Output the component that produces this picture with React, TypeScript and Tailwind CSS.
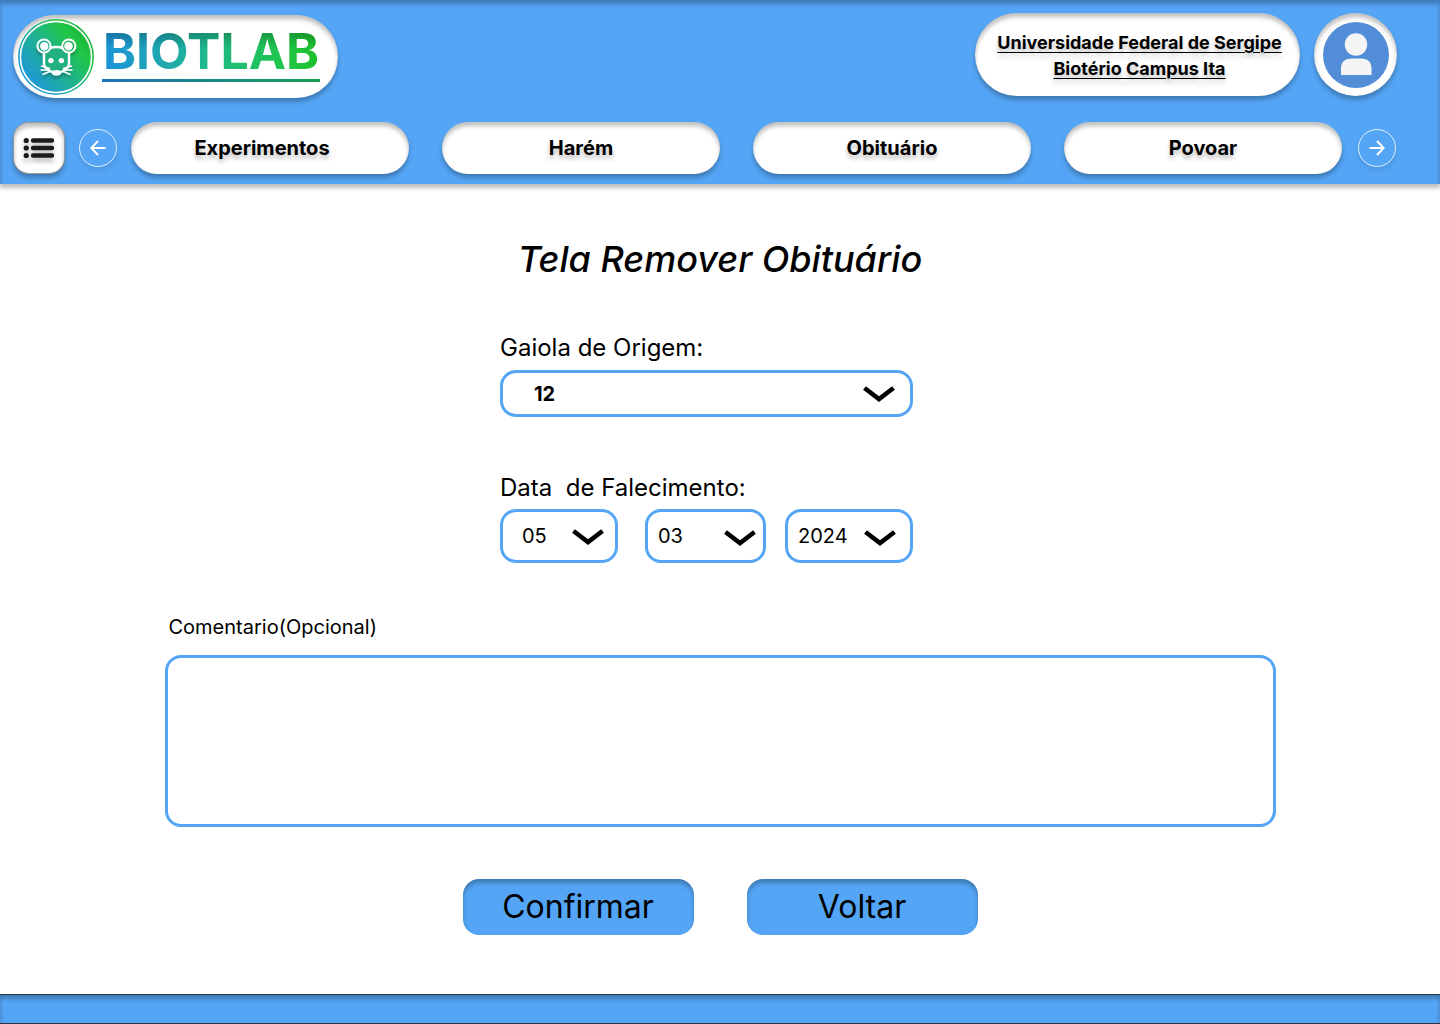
import { useState } from "react";
import type { ReactNode } from "react";

const PILL_SHADOW =
  "bg-white shadow-[0_4px_4px_rgba(0,0,0,0.25),inset_0_4px_4px_rgba(0,0,0,0.25)]";

function MouseBadge() {
  return (
    <svg viewBox="0 0 78 78" className="size-[78px] shrink-0" aria-hidden="true">
      <defs>
        <linearGradient id="badge" x1="0.1" y1="0.8" x2="0.85" y2="0.2">
          <stop offset="0" stopColor="#1c96dd" />
          <stop offset="0.5" stopColor="#1fb48c" />
          <stop offset="0.85" stopColor="#1fc745" />
          <stop offset="1" stopColor="#1bb53c" />
        </linearGradient>
        <filter id="soft" x="-20%" y="-20%" width="140%" height="150%">
          <feDropShadow dx="0" dy="3" stdDeviation="1.5" floodOpacity="0.25" />
        </filter>
      </defs>
      <circle cx="39" cy="39" r="38" fill="url(#badge)" />
      <circle cx="39" cy="39" r="35.6" fill="none" stroke="white" strokeWidth="1.6" />
      <g filter="url(#soft)">
        <path
          d="M27 34V46C27 49 30 51.500 33 53L39.400 56L46 53C49 51.500 52 49 52 46V34C49 31 45 29 39.500 29S30 31 27 34Z"
          fill="#20b07e"
          stroke="white"
          strokeWidth="2.4"
        />
        <circle cx="27" cy="28" r="6.600" fill="#20a98c" stroke="white" strokeWidth="2" />
        <circle cx="51.8" cy="28" r="6.600" fill="#20b860" stroke="white" strokeWidth="2" />
        <circle cx="27.300" cy="28.3" r="4.200" fill="white" />
        <circle cx="51.500" cy="28.3" r="4.200" fill="white" />
        <circle cx="33.9" cy="42.6" r="2.7" fill="white" />
        <circle cx="44.4" cy="42.6" r="2.7" fill="white" />
        <ellipse cx="39.4" cy="54.800" rx="4.600" ry="2.800" fill="white" />
        <path d="M33 50.500L24 48M33 52L23.500 52M34 53L25.500 56.500M46 50.500L55 48M46 52L55.500 52M45 53L53.500 56.500" stroke="white" strokeWidth="1.5" />
      </g>
    </svg>
  );
}

function Chevron() {
  return (
    <svg viewBox="0 0 32 18" className="pointer-events-none h-[18px] w-8" fill="none" stroke="black" strokeWidth="4.6" aria-hidden="true">
      <path d="M1.500 3L16 14L30.500 3" />
    </svg>
  );
}

function Picker({ id, label, options, box, field, icon }: {
  id: string; label?: string; options: string[]; box: string; field: string; icon: string;
}) {
  const [value, setValue] = useState(options[0]);
  return (
    <div className={`relative ${box}`}>
      <select
        id={id}
        aria-label={label}
        value={value}
        onChange={(e) => setValue(e.target.value)}
        className={`size-full appearance-none rounded-2xl border-3 border-[#54a5f5] bg-white text-xl text-black ${field}`}
      >
        {options.map((o) => (
          <option key={o}>{o}</option>
        ))}
      </select>
      <span className={`pointer-events-none absolute inset-y-0 flex items-center ${icon}`}>
        <Chevron />
      </span>
    </div>
  );
}

function ArrowButton({ label, path }: { label: string; path: string }) {
  return (
    <button aria-label={label} className="flex size-[38px] shrink-0 items-center justify-center rounded-full border border-white/80 shadow-[0_4px_4px_rgba(0,0,0,0.08)]">
      <svg viewBox="0 0 16 16" className="size-4" fill="none" stroke="white" strokeWidth="2" aria-hidden="true">
        <path d={path} />
      </svg>
    </button>
  );
}

function ActionButton({ children }: { children: ReactNode }) {
  return (
    <button className="h-14 w-[231px] rounded-2xl bg-[#54a5f5] text-[32px] leading-none shadow-[inset_0_4px_4px_rgba(0,0,0,0.25)]">
      {children}
    </button>
  );
}

const NAV_ITEMS = [
  { name: "Experimentos", align: "pr-4" },
  { name: "Harém", align: "" },
  { name: "Obituário", align: "" },
  { name: "Povoar", align: "" },
];

export default function App() {
  return (
    <div className="flex min-h-screen flex-col bg-white font-['Inter',sans-serif] text-black">
      <header className="flex flex-col gap-6 bg-[#54a5f5] px-[13px] pt-[13px] pb-[10px] shadow-[0_4px_4px_rgba(0,0,0,0.25),inset_0_4px_4px_rgba(0,0,0,0.25)]">
        <div className="flex items-start justify-between pr-[30px]">
          <a href="#" className={`mt-[2px] flex h-[83px] w-[325px] items-center rounded-full pl-1 ${PILL_SHADOW}`}>
            <MouseBadge />
            <span className="mb-[9px] ml-[7px] flex flex-col border-b-3 [border-image:linear-gradient(to_right,#1b75bc,#1b9a50)_1]">
              <span className="bg-[linear-gradient(to_bottom,rgba(0,0,0,0.2)_20%,transparent_45%),linear-gradient(to_right,#1c92dc,#20b88a_50%,#1fc745_85%,#1bbf2a)] bg-clip-text px-px text-[50px] leading-[56px] font-bold text-transparent">
                BIOTLAB
              </span>
            </span>
          </a>
          <div className="flex items-center gap-[14px]">
            <p className={`flex h-[83px] w-[325px] flex-col items-center justify-center rounded-full pt-[2px] pl-1 text-center text-lg leading-[26px] font-bold underline decoration-1 underline-offset-[3px] [text-shadow:0_4px_4px_rgba(0,0,0,0.25)] ${PILL_SHADOW}`}>
              <span>Universidade Federal de Sergipe</span>
              <span>Biotério Campus Ita</span>
            </p>
            <button aria-label="Perfil" className={`flex size-[83px] items-center justify-center rounded-full ${PILL_SHADOW}`}>
              <svg viewBox="0 0 66 66" className="size-[66px]" aria-hidden="true">
                <circle cx="33" cy="33" r="33" fill="#528dd8" />
                <circle cx="33" cy="22.5" r="11.2" fill="#f5f5f5" />
                <path d="M18 53V47Q18 36.500 28.500 36.500H38Q48.500 36.500 48.500 47V53Z" fill="#f5f5f5" />
              </svg>
            </button>
          </div>
        </div>
        <nav className="flex items-center gap-[14px] pr-[31px]">
          <button aria-label="Menu" className={`flex size-[52px] shrink-0 items-center justify-center rounded-2xl border border-black/40 ${PILL_SHADOW}`}>
            <svg viewBox="0 0 32 24" className="h-6 w-8 drop-shadow-[0_4px_2px_rgba(0,0,0,0.25)]" stroke="#1c1a1c" fill="#1c1a1c" strokeWidth="4.400" strokeLinecap="round" aria-hidden="true">
              <path d="M10 4.500H29M10 12H29M10 19.500H29" />
              <path d="M3.200 4.500h0.100M3.200 12h0.100M3.200 19.500h0.100" strokeWidth="5.200" />
            </svg>
          </button>
          <ArrowButton label="Anterior" path="M15.500 8H1.500M8 1L1.300 8L8 15" />
          <div className="mr-[2px] grid flex-1 grid-cols-4 gap-[33px]">
            {NAV_ITEMS.map(({ name, align }) => (
              <button key={name} className={`h-[52px] rounded-full text-xl font-bold [text-shadow:0_4px_4px_rgba(0,0,0,0.25)] ${align} ${PILL_SHADOW}`}>
                {name}
              </button>
            ))}
          </div>
          <ArrowButton label="Próximo" path="M0.500 8H14.500M8 1L14.700 8L8 15" />
        </nav>
      </header>

      <main className="flex flex-1 flex-col items-center px-6 pt-[50px] pb-[59px]">
        <h1 className="text-4xl leading-[50px] font-medium italic">Tela Remover Obituário</h1>
        <form className="flex w-full max-w-[1111px] flex-col" onSubmit={(e) => e.preventDefault()}>
          <div className="flex flex-col items-center pt-[49px] pr-[27px]">
            <div className="flex w-[413px] flex-col">
              <label htmlFor="gaiola" className="text-2xl leading-[30px]">Gaiola de Origem:</label>
              <Picker id="gaiola" options={["12"]} box="mt-[7px] h-[47px]" field="pl-[31px] font-bold" icon="right-[18px]" />
              <fieldset className="mt-14">
                <legend className="text-2xl leading-[30px] whitespace-pre">Data  de Falecimento:</legend>
                <div className="mt-[6px] flex justify-between">
                  <Picker id="dia" label="Dia" options={["05"]} box="h-[54px] w-[118px]" field="pl-[19px]" icon="right-[14px] pt-[2px]" />
                  <Picker id="mes" label="Mês" options={["03"]} box="ml-2 h-[54px] w-[121px]" field="pl-[10px]" icon="right-[10px] pt-[4px]" />
                  <Picker id="ano" label="Ano" options={["2024"]} box="h-[54px] w-[128px]" field="pl-[10px]" icon="right-[17px] pt-[4px]" />
                </div>
              </fieldset>
            </div>
          </div>
          <label htmlFor="comentario" className="mt-[49px] pl-1 text-xl leading-[30px]">Comentario(Opcional)</label>
          <textarea id="comentario" className="mt-[13px] block h-[172px] w-full resize-none rounded-2xl border-3 border-[#54a5f5] p-3 text-xl" />
          <div className="mt-[52px] flex justify-center gap-[53px]">
            <ActionButton>Confirmar</ActionButton>
            <ActionButton>Voltar</ActionButton>
          </div>
        </form>
      </main>
      <footer className="h-[30px] border-y border-[#2b3540] bg-[#54a5f5] shadow-[inset_0_4px_4px_rgba(0,0,0,0.25)]" />
    </div>
  );
}
